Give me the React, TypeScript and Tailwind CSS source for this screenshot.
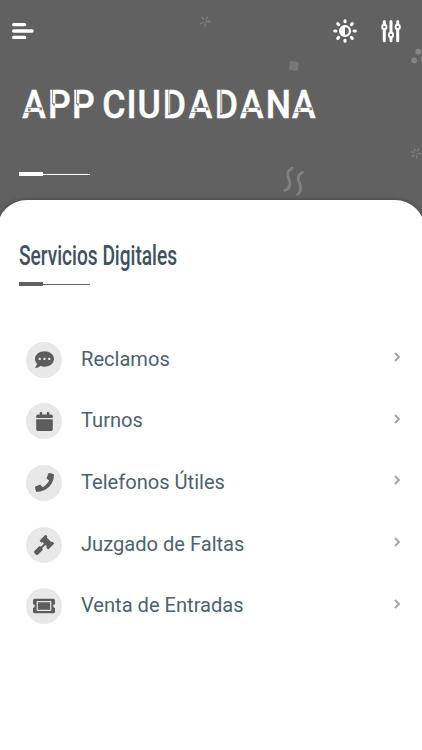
import React from 'react';
import type { IconType } from 'react-icons';
import { FaCalendar, FaCommentDots, FaGavel, FaPhone, FaTicketAlt } from 'react-icons/fa';

interface Service {
  label: string;
  icon: IconType;
  size: number;
}

const services: Service[] = [
  { label: 'Reclamos', icon: FaCommentDots, size: 19 },
  { label: 'Turnos', icon: FaCalendar, size: 19 },
  { label: 'Telefonos Útiles', icon: FaPhone, size: 19 },
  { label: 'Juzgado de Faltas', icon: FaGavel, size: 20 },
  { label: 'Venta de Entradas', icon: FaTicketAlt, size: 22 },
];

const MenuIcon = () => (
  <svg width="22" height="18" viewBox="0 0 22 18" stroke="currentColor" strokeWidth="3.4" strokeLinecap="round">
    <path d="M1.7 2.6H12.6M1.7 9H20M1.7 15.4H12.6" />
  </svg>
);

const BrightnessIcon = () => (
  <svg width="24" height="24" viewBox="0 0 24 24" fill="none" stroke="currentColor" strokeLinecap="round">
    <circle cx="12" cy="12" r="4.9" strokeWidth="2.3" />
    <path d="M12 7a5 5 0 0 0 0 10z" fill="currentColor" stroke="none" />
    <path
      strokeWidth="3.1"
      d="M12 1.7v1M12 21.3v1M1.7 12h1.2M21.1 12h1.2M4.7 4.7l.9.9M18.4 18.4l.9.9M4.7 19.3l.9-.9M18.4 5.6l.9-.9"
    />
  </svg>
);

const SlidersIcon = () => (
  <svg width="20" height="24" viewBox="0 0 20 24" fill="none" stroke="currentColor" strokeLinecap="round">
    <path strokeWidth="3" d="M3.3 2.5V5M3.3 11V21.7M10 2.5V13.5M10 19V21.7M16.7 2.5V5M16.7 11V21.7" />
    <g strokeWidth="2">
      <rect x="1.3" y="6" width="4" height="4" rx="1" />
      <rect x="8" y="14" width="4" height="4" rx="1" />
      <rect x="14.7" y="6" width="4" height="4" rx="1" />
    </g>
  </svg>
);

// Decorative confetti behind the header
const Confetti = () => (
  <svg className="absolute inset-0" width="422" height="220" viewBox="0 0 422 220" fill="none">
    <g stroke="#808080" strokeWidth="1.3" strokeLinecap="round">
      <path d="M206.5 21.5h3.2M205.3 23.5v2.7M203 22.5l-2.2 1.2M203.3 19.2l-1.3-2M206.2 19l1.2-1.8" />
      <path d="M417.5 153.5h3M416.3 155.5l.8 2.5M413.8 155l-1.6 1.8M413.5 152.3l-2.4-.6M415 150.8l-.6-2M417 151l1.8-1.8" />
    </g>
    <path d="M290 60.7l9 1.3-1.3 9-9-1.3z" fill="#787878" />
    <g fill="#858585">
      <circle cx="418.3" cy="51.7" r="2.9" />
      <circle cx="414.2" cy="60.6" r="3" />
      <circle cx="423" cy="58.7" r="2.6" />
    </g>
    <g stroke="#808080" strokeWidth="2.8" strokeLinecap="round">
      <path d="M292 168.3c-5.5 3.5-5 7-3 11s1 9.500-4.300 11.200" />
      <path d="M302.5 172.2c-5.5 3.5-5 7-3 11s1 9.500-2 11.200" />
    </g>
  </svg>
);

const A_LEFT = [22.5, 189, 240.5, 292.5];
const P_LEFT = [50, 74];
const D_LEFT = [165, 217];

// Stencil wordmark, the cuts are painted over the letters
const Wordmark = () => (
  <svg className="overflow-visible" width="300" height="36" viewBox="20 86 300 36">
    <text
      transform="scale(.9 1)"
      x="24.8 53.2 79.9 100 113.7 140.6 152.8 180.9 209.6 238.7 266.8 295.4 324.5"
      y="118"
      fill="#fff"
      stroke="#fff"
      strokeWidth=".5"
      className="font-[Roboto,sans-serif] text-[39.5px] font-medium"
    >
      APP CIUDADANA
    </text>
    <g fill="#616161" fillOpacity=".8">
      {A_LEFT.map((x) => (
        <path key={x} d={`M${x + 5} 107.3h14v.8h-14zM${x + 2} 112h5v.7h-5zM${x + 5.5} 108.5h2.5v2.7h-2.5zM${x + 17} 107.5h2.5v2.7h-2.5z`} />
      ))}
      {P_LEFT.map((x) => (
        <path key={x} d={`M${x + 2} 89h.8v15h-.8zM${x + 2.8} 103.2h2v2.3h-2z`} />
      ))}
      {D_LEFT.map((x) => (
        <path key={x} d={`M${x + 3.4} 89h.9v25h-.9zM${x + 3} 113h2.5v1.8h-2.5z`} />
      ))}
    </g>
  </svg>
);

const Divider = ({ light = false }: { light?: boolean }) => (
  <div className={`flex w-[71px] items-center ${light ? 'text-white' : 'text-[#616161]'}`}>
    <span className="h-1 w-6 bg-current" />
    <span className="h-px flex-1 bg-current" />
  </div>
);

const ServiceRow: React.FC<{ service: Service }> = ({ service }) => {
  const Icon = service.icon;
  return (
    <li>
      <button className="flex h-[61.6px] w-full items-center pr-5 pl-[26px] text-left">
        <span className="flex size-9 items-center justify-center rounded-full bg-[#e8e8e8] text-[#5c5c5c]">
          <Icon size={service.size} />
        </span>
        <span className="-mt-0.5 ml-[19px] flex-1 text-[20.1px] leading-6 text-[#4c626e]">{service.label}</span>
        <svg className="-mt-[5px]" width="10" height="12" viewBox="0 0 10 12" fill="none" stroke="#9aa4aa" strokeWidth="1.8">
          <path d="M3 2l4 4-4 4" />
        </svg>
      </button>
    </li>
  );
};

export default function App() {
  return (
    <div className="relative h-[750px] w-[422px] overflow-hidden bg-[#616161] font-[Roboto,sans-serif]">
      <Confetti />
      <header className="relative h-[200px] text-white">
        <div className="flex h-[62px] items-center pr-[21px] pl-3">
          <MenuIcon />
          <div className="ml-auto flex items-center gap-6">
            <BrightnessIcon />
            <SlidersIcon />
          </div>
        </div>
        <h1 className="mt-6 ml-5">
          <Wordmark />
        </h1>
        <div className="mt-[50px] ml-[19px]">
          <Divider light />
        </div>
      </header>

      <main className="relative -mx-[3px] h-[580px] rounded-t-[30px] bg-white px-[3px] shadow-[0_0_5px_rgba(0,0,0,0.35)]">
        <div className="pt-[38px] pl-[19px]">
          <h2 className="w-[230px] origin-left scale-x-[.708] text-[27px] leading-9 font-medium whitespace-nowrap text-[#40525d]">
            Servicios Digitales
          </h2>
          <div className="mt-2">
            <Divider />
          </div>
        </div>
        <ul className="mt-[43px]">
          {services.map((service) => (
            <ServiceRow key={service.label} service={service} />
          ))}
        </ul>
      </main>
    </div>
  );
}
